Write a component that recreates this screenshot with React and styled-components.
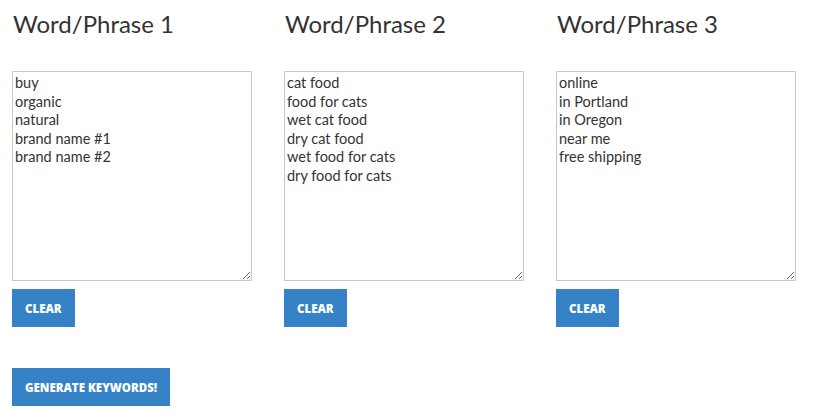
import React from "react";
import styled, { createGlobalStyle } from "styled-components";

const Global = createGlobalStyle`
  html, body { margin: 0; padding: 0; background: #fff; }
  body { font-family: "Lato", "Open Sans", sans-serif; color: #333; }
`;

const Page = styled.div`
  padding: 6px 12px 0 12px;
`;

const Columns = styled.div`
  display: grid;
  grid-template-columns: repeat(3, 240px);
  column-gap: 32px;
`;

const Column = styled.div`
  display: flex;
  flex-direction: column;
  align-items: flex-start;
`;

const Heading = styled.h2`
  margin: 0 0 0 1px;
  font-family: "Lato", sans-serif;
  font-weight: 400;
  font-size: 24px;
  line-height: 36px;
  color: #333;
  height: 65px;
`;

const Area = styled.textarea`
  box-sizing: border-box;
  width: 240px;
  height: 210px;
  margin: 0;
  padding: 2px 2px;
  border: 1px solid #c8c8c8;
  font-family: "Lato", sans-serif;
  font-size: 14.5px;
  line-height: 18.6px;
  color: #333;
  outline: none;
`;

const Button = styled.button`
  box-sizing: border-box;
  height: 38px;
  padding: 0 13px;
  margin-top: ${(p) => p.$top || 0}px;
  border: none;
  background: #3583c6;
  color: #fff;
  font-family: "Open Sans", sans-serif;
  font-weight: 800;
  font-size: 11.5px;
  text-transform: uppercase;
  cursor: pointer;
`;

const cols = [
  { title: "Word/Phrase 1", text: "buy\norganic\nnatural\nbrand name #1\nbrand name #2" },
  { title: "Word/Phrase 2", text: "cat food\nfood for cats\nwet cat food\ndry cat food\nwet food for cats\ndry food for cats" },
  { title: "Word/Phrase 3", text: "online\nin Portland\nin Oregon\nnear me\nfree shipping" },
];

export default function App() {
  return (
    <>
      <Global />
      <Page>
        <Columns>
          {cols.map((c) => (
            <Column key={c.title}>
              <Heading>{c.title}</Heading>
              <Area defaultValue={c.text} spellCheck={false} />
              <Button $top={8}>Clear</Button>
            </Column>
          ))}
        </Columns>
        <Button $top={41}>Generate Keywords!</Button>
      </Page>
    </>
  );
}
